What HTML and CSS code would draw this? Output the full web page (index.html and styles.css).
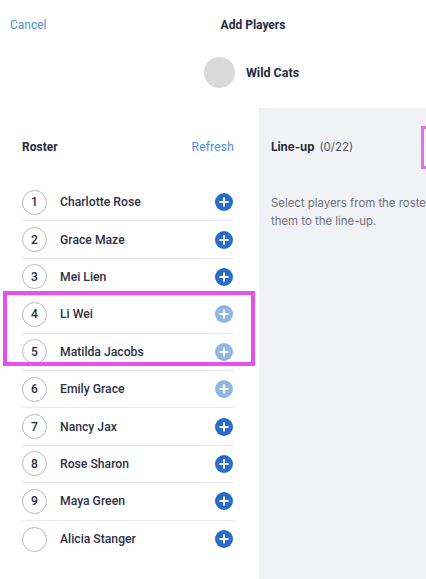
FILE: index.html
```html
<!DOCTYPE html>
<html>
<head>
<meta charset="utf-8">
<link rel="stylesheet" href="styles.css">
</head>
<body>
<div class="page">
  <header class="topbar">
    <a class="cancel">Cancel</a>
    <h1 class="title">Add Players</h1>
    <span></span>
  </header>
  <div class="team">
    <span class="avatar"></span>
    <span class="team-name">Wild Cats</span>
  </div>
  <main class="main">
    <section class="roster">
      <div class="roster-head">
        <h2>Roster</h2>
        <a class="refresh">Refresh</a>
      </div>
      <ul class="list">
        <li class="row"><span class="num">1</span><span class="name">Charlotte Rose</span><svg class="add" viewBox="0 0 18 18"><circle cx="9" cy="9" r="9"/><path d="M9 4.5v9M4.5 9h9"/></svg></li>
        <li class="row"><span class="num">2</span><span class="name">Grace Maze</span><svg class="add" viewBox="0 0 18 18"><circle cx="9" cy="9" r="9"/><path d="M9 4.5v9M4.5 9h9"/></svg></li>
        <li class="row"><span class="num">3</span><span class="name">Mei Lien</span><svg class="add" viewBox="0 0 18 18"><circle cx="9" cy="9" r="9"/><path d="M9 4.5v9M4.5 9h9"/></svg></li>
        <li class="row"><span class="num">4</span><span class="name">Li Wei</span><svg class="add off" viewBox="0 0 18 18"><circle cx="9" cy="9" r="9"/><path d="M9 4.5v9M4.5 9h9"/></svg></li>
        <li class="row"><span class="num">5</span><span class="name">Matilda Jacobs</span><svg class="add off" viewBox="0 0 18 18"><circle cx="9" cy="9" r="9"/><path d="M9 4.5v9M4.5 9h9"/></svg></li>
        <li class="row"><span class="num">6</span><span class="name">Emily Grace</span><svg class="add off" viewBox="0 0 18 18"><circle cx="9" cy="9" r="9"/><path d="M9 4.5v9M4.5 9h9"/></svg></li>
        <li class="row"><span class="num">7</span><span class="name">Nancy Jax</span><svg class="add" viewBox="0 0 18 18"><circle cx="9" cy="9" r="9"/><path d="M9 4.5v9M4.5 9h9"/></svg></li>
        <li class="row"><span class="num">8</span><span class="name">Rose Sharon</span><svg class="add" viewBox="0 0 18 18"><circle cx="9" cy="9" r="9"/><path d="M9 4.5v9M4.5 9h9"/></svg></li>
        <li class="row"><span class="num">9</span><span class="name">Maya Green</span><svg class="add" viewBox="0 0 18 18"><circle cx="9" cy="9" r="9"/><path d="M9 4.5v9M4.5 9h9"/></svg></li>
        <li class="row last"><span class="num"></span><span class="name">Alicia Stanger</span><svg class="add" viewBox="0 0 18 18"><circle cx="9" cy="9" r="9"/><path d="M9 4.5v9M4.5 9h9"/></svg></li>
      </ul>
    </section>
    <section class="lineup">
      <div class="lineup-head">
        <h2>Line-up</h2>
        <span class="count">(0/22)</span>
      </div>
      <p class="hint">Select players from the roster to add them to the line-up.</p>
    </section>
  </main>
  <div class="highlight-left"></div>
  <div class="highlight-right"></div>
</div>
</body>
</html>
```

FILE: styles.css
```css
* { box-sizing: border-box; margin: 0; padding: 0; }
html, body { background: #fff; overflow: hidden; }
body { width: 426px; height: 579px; }
.page {
  position: relative;
  width: 506px;
  height: 579px;
  font-family: Roboto, "Liberation Sans", sans-serif;
  color: #272a40;
  display: flex;
  flex-direction: column;
}
.topbar {
  display: grid;
  grid-template-columns: 1fr auto 1fr;
  align-items: center;
  height: 49px;
  padding: 0 10px;
}
.cancel { color: #4a8fd9; font-size: 12px; }
.title { font-size: 12px; font-weight: 700; color: #272a40; }
.team {
  height: 59px;
  display: flex;
  align-items: center;
  justify-content: center;
  gap: 11px;
  padding-right: 3px;
  padding-bottom: 12px;
}
.avatar { width: 31px; height: 31px; border-radius: 50%; background: #d9d9d9; }
.team-name { font-size: 12.5px; font-weight: 700; color: #272a40; }
.main { flex: 1; display: flex; }
.roster { width: 259px; padding: 30px 25px 0 22px; }
.roster-head { display: flex; justify-content: space-between; align-items: center; height: 18px; }
.roster-head h2 { font-size: 12px; font-weight: 700; color: #272a40; }
.refresh { color: #4a8fd9; font-size: 12px; letter-spacing: 0.2px; }
.list { list-style: none; margin-top: 28px; }
.row {
  height: 37.4px;
  display: flex;
  align-items: center;
  border-bottom: 1px solid #e8eaee;
}
.row.last { border-bottom: none; }
.num {
  width: 25px; height: 25px;
  border: 1px solid #b8bac2;
  border-radius: 50%;
  display: flex; align-items: center; justify-content: center;
  font-size: 12px; font-weight: 500; color: #272a40;
  flex: none;
}
.name { margin-left: 13px; font-size: 12.2px; font-weight: 500; color: #2d3046; flex: 1; }
.add { width: 18px; height: 18px; flex: none; margin-right: 1px; }
.add circle { fill: #2a6dc6; }
.add path { stroke: #fff; stroke-width: 2; fill: none; }
.add.off circle { fill: #8fb7e3; }
.lineup { flex: 1; background: #f1f2f6; padding: 30px 12px 0 12px; font-family: Inter, "Liberation Sans", sans-serif; }
.lineup-head { display: flex; align-items: center; gap: 5px; height: 18px; }
.lineup-head h2 { font-size: 11.5px; font-weight: 700; color: #272a40; }
.count { font-size: 11.5px; color: #555866; }
.hint { margin-top: 38px; font-size: 11.4px; line-height: 18px; color: #6b6e7a; max-width: 215px; }
.highlight-left {
  position: absolute;
  left: 3px; top: 291px;
  width: 252px; height: 75px;
  border: 4px solid #e650ec;
}
.highlight-right {
  position: absolute;
  left: 421px; top: 126px;
  width: 60px; height: 43px;
  border: 3px solid #e070ec;
}
```
